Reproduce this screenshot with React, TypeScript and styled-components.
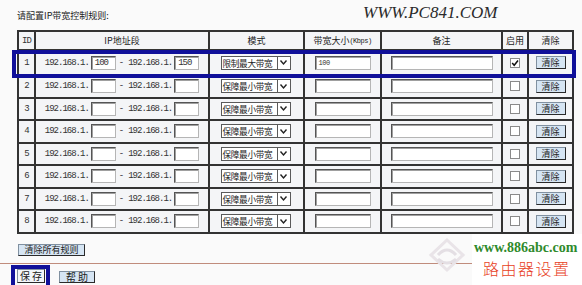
import React from "react";
import styled, { createGlobalStyle } from "styled-components";

const Global = createGlobalStyle`
  html, body { margin: 0; padding: 0; background: #fafafa; }
  body { font-family: "Noto Sans CJK SC", "Noto Sans", sans-serif; }
`;

const Page = styled.div`
  position: relative;
  width: 582px;
  height: 285px;
  overflow: hidden;
  background: #fafafa;
  color: #222;
`;

const Title = styled.div`
  height: 30px;
  box-sizing: border-box;
  padding: 9px 0 0 17px;
  font-size: 9px;
  line-height: 14px;
  color: #222;
`;

const SiteMark = styled.div`
  position: absolute;
  left: 363px;
  top: 3px;
  font-family: "Liberation Serif", serif;
  font-style: italic;
  font-size: 17px;
  line-height: 20px;
  color: #2a2a2a;
`;

const COLS = "17px 174px 95px 77px 121px 26px 45px";

const Table = styled.div`
  margin-left: 17px;
  width: 557px;
  box-sizing: border-box;
  border-left: 2px solid #333;
  border-top: 2px solid #333;
`;

const Row = styled.div<{ $h: number }>`
  display: grid;
  grid-template-columns: ${COLS};
  height: ${(p) => p.$h}px;
`;

const Cell = styled.div`
  box-sizing: border-box;
  min-width: 0;
  border-right: 2px solid #333;
  border-bottom: 2px solid #333;
  background: #f4f5f7;
  display: flex;
  align-items: center;
  justify-content: center;
  font-size: 9px;
  line-height: 12px;
  white-space: nowrap;
`;

const Mono = styled.span<{ $size?: number }>`
  font-family: "Liberation Mono", monospace;
  font-size: ${(p) => p.$size ?? 9}px;
  letter-spacing: ${(p) => ((p.$size ?? 9) >= 9 ? -1 : -0.4)}px;
  color: #333;
`;

const Small = styled.span`
  font-family: "Liberation Mono", monospace;
  font-size: 7px;
  letter-spacing: -0.5px;
`;

const Dash = styled.span`
  margin: 0 4px 0 3px;
  font-family: "Liberation Mono", monospace;
  font-size: 9px;
  color: #333;
`;

const TextInput = styled.div<{ $w: number }>`
  box-sizing: border-box;
  width: ${(p) => p.$w}px;
  height: 14px;
  background: #fff;
  border-top: 1px solid #555;
  border-left: 1px solid #555;
  border-bottom: 1px solid #b5b5b5;
  border-right: 1px solid #b5b5b5;
  box-shadow: inset 1px 1px 0 #a0a0a0;
  display: flex;
  align-items: center;
  padding-left: 3px;
  margin-left: ${(p) => (p.$w < 30 ? 2 : 0)}px;
`;

const Select = styled.div`
  box-sizing: border-box;
  width: 70px;
  height: 14px;
  border: 1px solid #5a5a5a;
  background: #fff;
  display: flex;
  align-items: stretch;
  margin-left: -2px;
`;

const SelectText = styled.div`
  flex: 1;
  min-width: 0;
  overflow: hidden;
  font-size: 8.6px;
  line-height: 12px;
  letter-spacing: -0.3px;
  padding-left: 1px;
  color: #222;
`;

const SelectArrow = styled.div`
  width: 12px;
  flex: none;
  border-left: 1px solid #5a5a5a;
  display: flex;
  align-items: center;
  justify-content: center;
`;

const Check = styled.div`
  box-sizing: border-box;
  width: 10px;
  height: 10px;
  border: 1px solid #8a8a8a;
  background: #fff;
  display: flex;
  align-items: center;
  justify-content: center;
`;

const Btn = styled.div<{ $w: number; $h?: number }>`
  box-sizing: border-box;
  width: ${(p) => p.$w}px;
  height: ${(p) => p.$h ?? 13}px;
  background: #d6e5f3;
  border-top: 1px solid #8090a0;
  border-left: 1px solid #8090a0;
  border-right: 1px solid #2a2a2a;
  border-bottom: 1px solid #2a2a2a;
  display: flex;
  align-items: center;
  justify-content: center;
  font-size: 9px;
  line-height: 11px;
  color: #222;
`;

const Highlight = styled.div`
  position: absolute;
  left: 12px;
  top: 50px;
  width: 564px;
  height: 28px;
  box-sizing: border-box;
  border: 4px solid #10109a;
  pointer-events: none;
`;

const ClearAllWrap = styled.div`
  margin: 10px 0 0 18px;
`;

const Divider = styled.div`
  margin-top: 7px;
  height: 1px;
  background: #c08c7c;
`;

const Footer = styled.div`
  display: flex;
  align-items: flex-start;
  gap: 9px;
  padding-left: 11px;
  margin-top: 1px;
`;

const SaveFrame = styled.div`
  box-sizing: border-box;
  border: 4px solid #10109a;
  border-bottom: none;
  padding: 0 1px 0 2px;
  height: 24px;
`;

const SaveBtn = styled(Btn)`
  background: #f2f6fa;
  font-size: 10px;
  letter-spacing: 2px;
  padding-left: 2px;
`;

const HelpBtn = styled(Btn)`
  margin-top: 6px;
  font-size: 10px;
  letter-spacing: 2px;
  padding-left: 2px;
`;

const Stamp = styled.div`
  position: absolute;
  left: 472px;
  top: 234px;
  width: 110px;
  height: 51px;
  background: #fff;
`;

const StampUrl = styled.div`
  padding: 6px 0 0 2px;
  font-family: "Liberation Serif", serif;
  font-weight: bold;
  font-size: 14px;
  line-height: 16px;
  color: #2f8a2c;
`;

const StampName = styled.div`
  padding: 2px 0 0 11px;
  font-size: 16px;
  line-height: 20px;
  font-weight: 300;
  letter-spacing: 1.5px;
  color: #e8421e;
`;

const Ghost = styled.svg`
  position: absolute;
  left: 428px;
  top: 237px;
`;

type Rule = { id: number; start: string; end: string; mode: string; bw: string; on: boolean };

const rules: Rule[] = Array.from({ length: 8 }, (_, i) =>
  i === 0
    ? { id: 1, start: "100", end: "150", mode: "限制最大带宽", bw: "100", on: true }
    : { id: i + 1, start: "", end: "", mode: "保障最小带宽", bw: "", on: false }
);

const Chevron = () => (
  <svg width="9" height="7" viewBox="0 0 9 7">
    <polyline points="1.5,1.5 4.5,5 7.5,1.5" fill="none" stroke="#222" strokeWidth="1.4" />
  </svg>
);

const Tick = () => (
  <svg width="8" height="8" viewBox="0 0 8 8">
    <polyline points="1.2,4 3.2,6.3 7,1.5" fill="none" stroke="#111" strokeWidth="1.5" />
  </svg>
);

export default function App() {
  return (
    <Page>
      <Global />
      <Title>请配置IP带宽控制规则:</Title>
      <SiteMark>WWW.PC841.COM</SiteMark>
      <Table>
        <Row $h={19}>
          <Cell>
            <Mono>ID</Mono>
          </Cell>
          <Cell>IP地址段</Cell>
          <Cell>模式</Cell>
          <Cell>
            带宽大小<Small>(Kbps)</Small>
          </Cell>
          <Cell>备注</Cell>
          <Cell>启用</Cell>
          <Cell>清除</Cell>
        </Row>
        {rules.map((r) => (
          <Row key={r.id} $h={r.id === 1 ? 25 : 22.5}>
            <Cell>
              <Mono>{r.id}</Mono>
            </Cell>
            <Cell>
              <Mono>192.168.1.</Mono>
              <TextInput $w={25}>
                <Mono>{r.start}</Mono>
              </TextInput>
              <Dash>-</Dash>
              <Mono>192.168.1.</Mono>
              <TextInput $w={25}>
                <Mono>{r.end}</Mono>
              </TextInput>
            </Cell>
            <Cell>
              <Select>
                <SelectText>{r.mode}</SelectText>
                <SelectArrow>
                  <Chevron />
                </SelectArrow>
              </Select>
            </Cell>
            <Cell>
              <TextInput $w={56}>
                <Mono $size={7}>{r.bw}</Mono>
              </TextInput>
            </Cell>
            <Cell>
              <TextInput $w={102} />
            </Cell>
            <Cell>
              <Check>{r.on && <Tick />}</Check>
            </Cell>
            <Cell>
              <Btn $w={30}>清除</Btn>
            </Cell>
          </Row>
        ))}
      </Table>
      <Highlight />
      <ClearAllWrap>
        <Btn $w={67} $h={12}>
          清除所有规则
        </Btn>
      </ClearAllWrap>
      <Divider />
      <Footer>
        <SaveFrame>
          <SaveBtn $w={28} $h={14}>
            保存
          </SaveBtn>
        </SaveFrame>
        <HelpBtn $w={36} $h={12}>
          帮助
        </HelpBtn>
      </Footer>
      <Ghost width="38" height="36" viewBox="0 0 38 36">
        <path d="M19 3 L35 18 L19 33 L3 18 Z" fill="none" stroke="#e9e4e8" strokeWidth="3" />
        <path d="M10 18 Q19 8 28 18" fill="none" stroke="#e4dfe4" strokeWidth="3" />
        <path d="M10 22 Q19 30 28 22" fill="none" stroke="#e4dfe4" strokeWidth="3" />
      </Ghost>
      <Stamp>
        <StampUrl>www.886abc.com</StampUrl>
        <StampName>路由器设置</StampName>
      </Stamp>
    </Page>
  );
}
